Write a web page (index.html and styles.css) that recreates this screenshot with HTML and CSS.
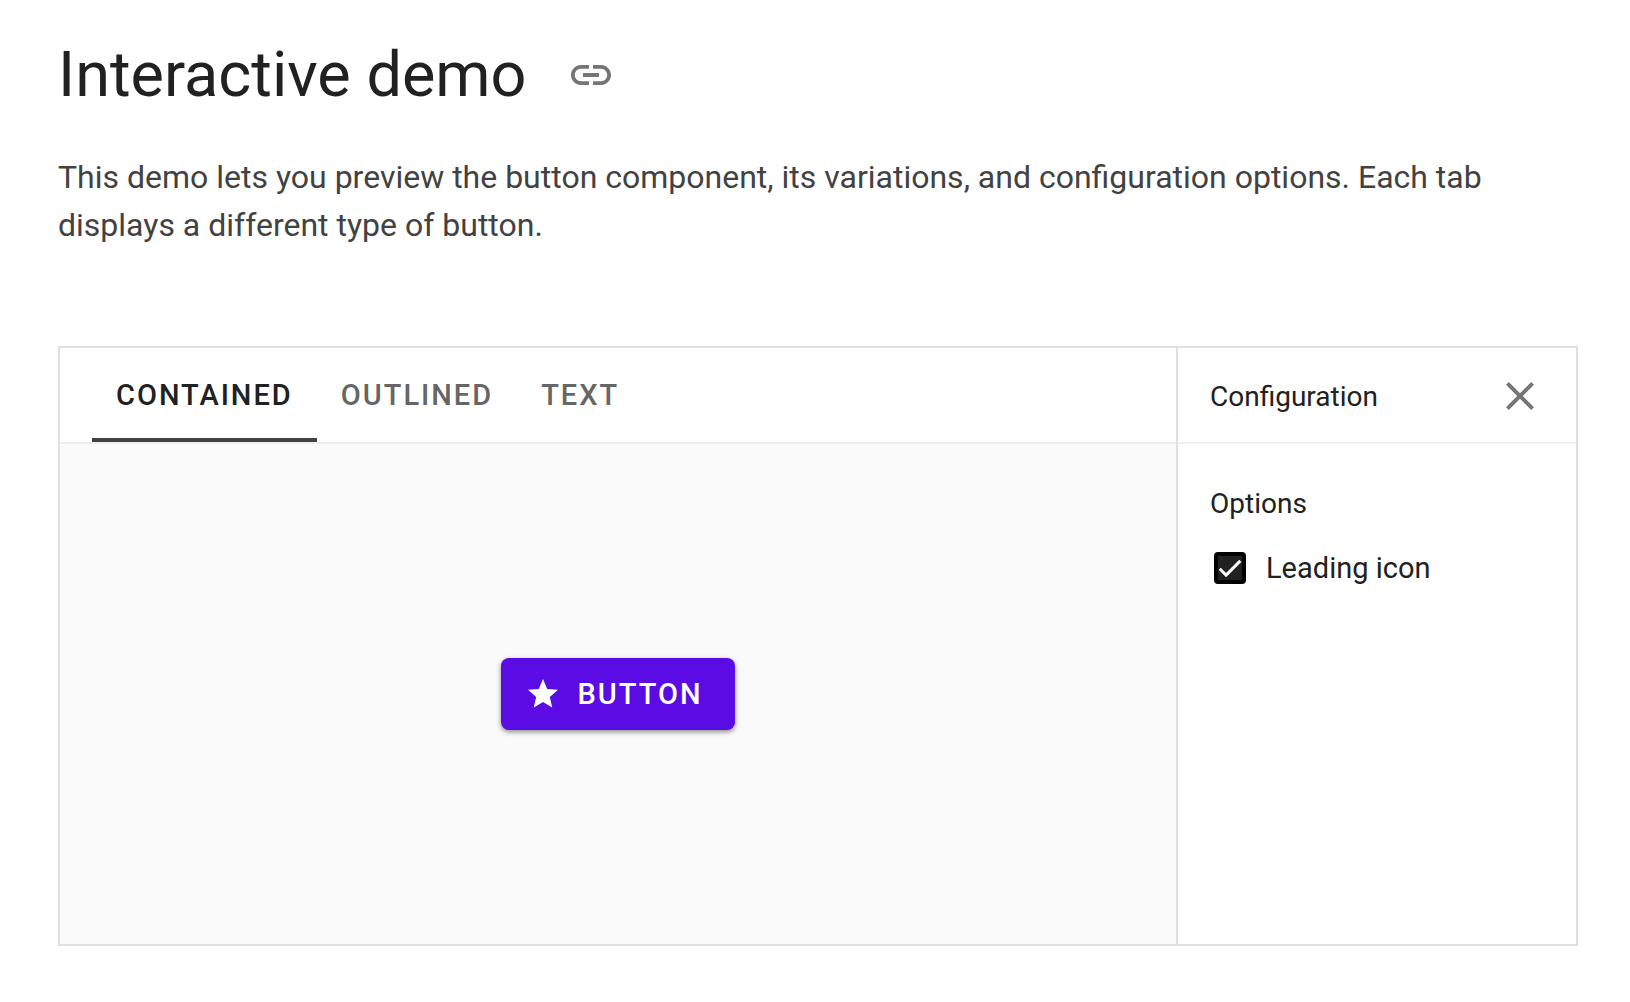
FILE: index.html
```html
<!DOCTYPE html>
<html lang="en">
<head>
<meta charset="utf-8">
<title>Interactive demo</title>
<link rel="stylesheet" href="styles.css">
</head>
<body>
<main class="page">
  <header class="heading">
    <h1 class="title">Interactive demo</h1>
    <a class="anchor" href="#demo" aria-label="Link to this section">
      <svg class="icon-link" viewBox="0 0 24 24" aria-hidden="true"><path d="M3.9 12c0-1.710 1.390-3.100 3.100-3.100h4V7H7c-2.760 0-5 2.240-5 5s2.240 5 5 5h4v-1.900H7c-1.710 0-3.100-1.390-3.100-3.100zM8 13h8v-2H8v2zm9-6h-4v1.900h4c1.710 0 3.100 1.390 3.100 3.100s-1.390 3.100-3.100 3.100h-4V17h4c2.760 0 5-2.240 5-5s-2.240-5-5-5z"/></svg>
    </a>
  </header>
  <p class="intro">This demo lets you preview the button component, its variations, and configuration options. Each tab displays a different type of button.</p>
  <section class="demo" id="demo">
    <div class="preview">
      <div class="tabs" role="tablist">
        <button class="tab tab-active" type="button" role="tab" aria-selected="true">CONTAINED</button>
        <button class="tab" type="button" role="tab" aria-selected="false">OUTLINED</button>
        <button class="tab" type="button" role="tab" aria-selected="false">TEXT</button>
      </div>
      <div class="stage">
        <button class="contained" type="button">
          <svg class="icon-star" viewBox="0 0 24 24" aria-hidden="true"><path d="M12 17.270L18.180 21l-1.640-7.030L22 9.240l-7.190-.610L12 2 9.190 8.630 2 9.240l5.460 4.730L5.820 21z"/></svg>
          <span>BUTTON</span>
        </button>
      </div>
    </div>
    <aside class="config">
      <div class="config-head">
        <h2 class="config-title">Configuration</h2>
        <button class="close" type="button" aria-label="Close">
          <svg class="icon-close" viewBox="0 0 24 24" aria-hidden="true"><path d="M19 6.410L17.590 5 12 10.590 6.410 5 5 6.410 10.590 12 5 17.590 6.410 19 12 13.410 17.590 19 19 17.590 13.410 12z"/></svg>
        </button>
      </div>
      <fieldset class="options">
        <legend class="legend">Options</legend>
        <label class="option"><input class="check" type="checkbox" checked><span>Leading icon</span></label>
      </fieldset>
    </aside>
  </section>
</main>
</body>
</html>
```
FILE: styles.css
```css
* { box-sizing: border-box; }

body {
  margin: 0;
  background: #fff;
  color: #212121;
  font-family: Roboto, "Liberation Sans", sans-serif;
}

button { font: inherit; border: 0; cursor: pointer; }

.page { padding: 33px 52px 56px 58px; }

.heading { display: flex; align-items: center; gap: 40px; }

.title { margin: 0; font-size: 63px; line-height: 84px; font-weight: 400; }

.anchor { display: flex; }

.icon-link { width: 48px; height: 48px; fill: #757575; }

.intro {
  margin: 36px 0 97px;
  max-width: 1440px;
  color: #424242;
  font-size: 32px;
  line-height: 48px;
}

.demo {
  display: grid;
  grid-template-columns: 1fr 400px;
  min-height: 600px;
  border: 2px solid #e0e0e0;
}

.preview { display: flex; flex-direction: column; }

.tabs {
  display: flex;
  height: 96px;
  padding: 0 32px;
  border-bottom: 2px solid #eee;
}

.tab {
  padding: 4px 24px 0;
  border-bottom: 4px solid transparent;
  background: none;
  color: #666;
  font-size: 29px;
  font-weight: 500;
  letter-spacing: 2px;
}

.tab-active { border-color: #424242; color: #212121; }

.stage {
  display: flex;
  flex: 1;
  align-items: center;
  justify-content: center;
  background: #fafafa;
}

.contained {
  display: flex;
  align-items: center;
  gap: 16px;
  height: 72px;
  padding: 0 32px 0 24px;
  border-radius: 8px;
  background: #5b0be3;
  box-shadow: 0 2px 5px rgba(0, 0, 0, 0.45);
  color: #fff;
  font-size: 29px;
  font-weight: 500;
  letter-spacing: 2px;
}

.icon-star { width: 36px; height: 36px; fill: #fff; }

.config { border-left: 2px solid #e0e0e0; }

.config-head {
  display: flex;
  align-items: center;
  justify-content: space-between;
  height: 96px;
  padding: 2px 32px 0;
  border-bottom: 2px solid #eee;
}

.config-title { margin: 0; font-size: 28px; font-weight: 400; }

.close { display: flex; padding: 0; background: none; }

.icon-close { width: 48px; height: 48px; fill: #757575; }

.options { margin: 0; padding: 38px 32px; border: 0; }

.legend { float: left; width: 100%; padding: 0; font-size: 28px; line-height: 44px; }

.option {
  display: flex;
  align-items: center;
  clear: both;
  gap: 20px;
  padding: 20px 4px;
  font-size: 29px;
  line-height: 44px;
}

.check {
  appearance: none;
  width: 32px;
  height: 32px;
  margin: 0;
  border: 4px solid #000;
  border-radius: 4px;
  background: #212121 url("data:image/svg+xml,%3Csvg xmlns='http://www.w3.org/2000/svg' viewBox='0 0 24 24'%3E%3Cpath fill='none' stroke='white' stroke-width='3' d='M1.700 12.700l6.400 6.400L22.300 4.900'/%3E%3C/svg%3E") center / 24px no-repeat;
}
```
